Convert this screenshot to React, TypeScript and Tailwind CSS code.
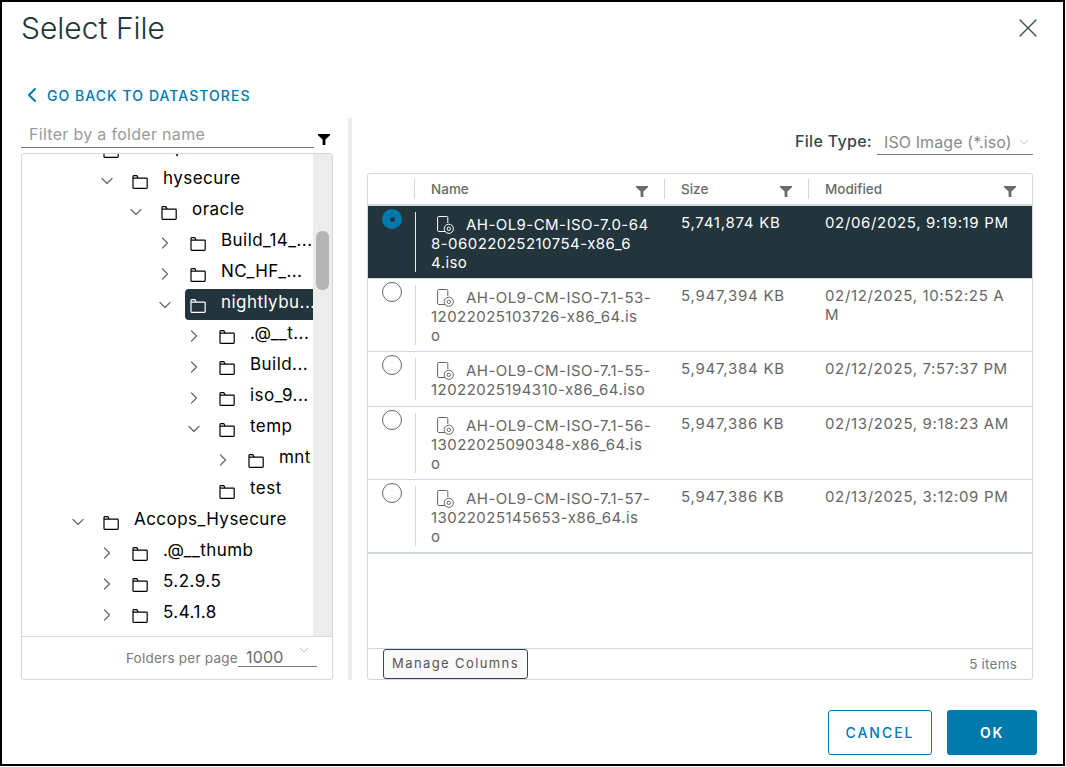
import { ChevronDown, ChevronLeft, ChevronRight, X } from "lucide-react";

const FONT = "font-['Inter','Liberation_Sans',sans-serif]";

interface TreeRow {
    name: string;
    level: number;
    open?: boolean;
    leaf?: boolean;
    selected?: boolean;
}

const TREE: TreeRow[] = [
    { name: "accops", level: 1, open: true },
    { name: "hysecure", level: 2, open: true },
    { name: "oracle", level: 3, open: true },
    { name: "Build_14_...", level: 4 },
    { name: "NC_HF_...", level: 4 },
    { name: "nightlybu...", level: 4, open: true, selected: true },
    { name: ".@__t...", level: 5 },
    { name: "Build...", level: 5 },
    { name: "iso_9...", level: 5 },
    { name: "temp", level: 5, open: true },
    { name: "mnt", level: 6 },
    { name: "test", level: 5, leaf: true },
    { name: "Accops_Hysecure", level: 1, open: true },
    { name: ".@__thumb", level: 2 },
    { name: "5.2.9.5", level: 2 },
    { name: "5.4.1.8", level: 2 },
];

const FILES = [
    {
        name: ["AH-OL9-CM-ISO-7.0-64", "8-06022025210754-x86_6", "4.iso"],
        size: "5,741,874 KB",
        modified: ["02/06/2025, 9:19:19 PM"],
        selected: true,
    },
    {
        name: ["AH-OL9-CM-ISO-7.1-53-", "12022025103726-x86_64.is", "o"],
        size: "5,947,394 KB",
        modified: ["02/12/2025, 10:52:25 A", "M"],
    },
    {
        name: ["AH-OL9-CM-ISO-7.1-55-", "12022025194310-x86_64.iso"],
        size: "5,947,384 KB",
        modified: ["02/12/2025, 7:57:37 PM"],
    },
    {
        name: ["AH-OL9-CM-ISO-7.1-56-", "13022025090348-x86_64.is", "o"],
        size: "5,947,386 KB",
        modified: ["02/13/2025, 9:18:23 AM"],
    },
    {
        name: ["AH-OL9-CM-ISO-7.1-57-", "13022025145653-x86_64.is", "o"],
        size: "5,947,386 KB",
        modified: ["02/13/2025, 3:12:09 PM"],
    },
];

function FolderIcon() {
    return (
        <svg width="16" height="14" viewBox="0 0 16 14" fill="none" stroke="currentColor" strokeWidth="1.2" className="mt-[3px] shrink-0">
            <path d="M1 3.2V1.4C1 1 1.3.7 1.7.7h3.1l1.5 2.5h8.2c.4 0 .7.3.7.7v8.7c0 .4-.3.7-.7.7H1.7c-.4 0-.7-.3-.7-.7V3.2h5.3" />
        </svg>
    );
}

function FilterIcon({ className }: { className: string }) {
    return (
        <svg width="12" height="11" viewBox="0 0 12 11" fill="currentColor" className={className}>
            <path d="M0 0h12v1.2L7.4 5.4V11H4.6V5.4L0 1.2z" />
        </svg>
    );
}

function IsoIcon() {
    return (
        <svg width="18" height="18" viewBox="0 0 18 18" fill="none" stroke="currentColor" strokeWidth="1" className="block shrink-0">
            <path d="M9 15.5H2.6c-.6 0-1-.4-1-1V1.5c0-.6.4-1 1-1h8.2c.6 0 1 .4 1 1V7" />
            <circle cx="12.8" cy="12.8" r="4.6" />
            <circle cx="12.8" cy="12.8" r="1.7" />
        </svg>
    );
}

function Tree() {
    return (
        <div className="-mt-[20px]">
            {TREE.map((row) => (
                <div key={row.name} className="flex h-[31px] items-center" style={{ paddingLeft: (row.level - 1) * 29 + 46 }}>
                    <span className="flex w-[20px] shrink-0 justify-center text-[#6b6b6b]">
                        {row.leaf ? null : row.open ? (
                            <ChevronDown size={22} strokeWidth={1.5} />
                        ) : (
                            <ChevronRight size={22} strokeWidth={1.5} />
                        )}
                    </span>
                    <div
                        className={`ml-[10px] flex h-[31px] min-w-0 flex-1 items-center gap-[15px] whitespace-nowrap rounded-l-[4px] pl-[5px] text-[17px] tracking-[0.45px] ${
                            row.selected ? "bg-[#22343c] text-white" : "text-black"
                        }`}
                    >
                        <FolderIcon />
                        <span className="-mt-[3px] overflow-hidden">{row.name}</span>
                    </div>
                </div>
            ))}
        </div>
    );
}

export default function App() {
    return (
        <div className={`${FONT} flex h-[766px] w-[1065px] flex-col border-2 border-black bg-white pl-[19px] pr-[30px]`}>
            <div className="flex h-[52px] shrink-0 items-center justify-between">
                <h1 className="text-[30px] font-light text-[#22343c]">Select File</h1>
                <X size={32} strokeWidth={1.1} className="-mr-[11px] text-[#47555c]" />
            </div>

            <div className="mt-[31px] flex h-[20px] items-center pl-[4px] text-[14px] font-medium tracking-[1.05px] text-[#0079ad]">
                <ChevronLeft size={24} strokeWidth={2} className="-ml-[5px] mr-[3px] shrink-0" />
                GO BACK TO DATASTORES
            </div>

            <div className="mt-[13px] flex h-[562px]">
                <div className="flex w-[312px] shrink-0 flex-col">
                    <div className="flex h-[35px] shrink-0 items-start">
                        <div className="mt-[6px] h-[24px] w-[293px] border-b border-[#6f7b82] px-[8px] text-[16px] leading-[20px] tracking-[0.3px] text-[#9a9a9a]">
                            Filter by a folder name
                        </div>
                        <FilterIcon className="ml-[4px] mt-[16px] text-black" />
                    </div>
                    <div className="flex min-h-0 flex-1 flex-col overflow-hidden rounded-[3px] border border-[#cfd8dc]">
                        <div className="flex min-h-0 flex-1">
                            <div className="min-w-0 flex-1 overflow-hidden">
                                <Tree />
                            </div>
                            <div className="w-[19px] shrink-0 bg-[#ececec] pl-[3px] pt-[77px]">
                                <div className="h-[59px] w-[13px] rounded-[6px] bg-[#b5b5b5]" />
                            </div>
                        </div>
                        <div className="flex h-[43px] shrink-0 items-start justify-end border-t border-[#cfd8dc] pr-[15px] pt-[11px] text-[13.5px] tracking-[0.25px] text-[#7a7a7a]">
                            <span>Folders per page</span>
                            <span className="flex h-[19px] w-[79px] justify-between border-b border-[#6f7b82] pl-[8px] text-[16px] leading-[18px] tracking-[0.2px] text-[#6b6b6b]">
                                1000
                                <ChevronDown size={16} strokeWidth={1} className="-mt-[6px] mr-[5px] text-[#9a9a9a]" />
                            </span>
                        </div>
                    </div>
                </div>

                <div className="ml-[15px] w-[4px] shrink-0 bg-[#ececec]" />

                <div className="ml-[15px] flex min-w-0 flex-1 flex-col">
                    <div className="flex h-[55px] shrink-0 items-start justify-end">
                        <span className="mr-[5px] mt-[11px] text-[16px] font-medium tracking-[0.3px] text-[#37474f]">File Type:</span>
                        <span className="mt-[11px] flex h-[26px] w-[156px] items-center justify-between border-b border-[#6f7b82] pl-[7px] text-[16px] tracking-[0.1px] text-[#8a8a8a]">
                            ISO Image (*.iso)
                            <ChevronDown size={14} strokeWidth={1} className="mr-[2px] text-[#9a9a9a]" />
                        </span>
                    </div>

                    <div className="flex min-h-0 flex-1 flex-col rounded-[3px] border border-[#cfd8dc]">
                        <div className="grid h-[32px] shrink-0 grid-cols-[47px_250px_144px_1fr] border-b-2 border-[#d4d9dc] text-[13.5px] font-medium text-[#6b6b6b]">
                            <div className="my-[5px] border-r border-[#cfd8dc]" />
                            {["Name", "Size", "Modified"].map((label, i) => (
                                <div key={label} className={`my-[5px] flex justify-between pl-[16px] pr-[16px] ${i < 2 ? "border-r border-[#cfd8dc]" : "pr-[15px]"}`}>
                                    <span className="mt-[1px] leading-[18px]">{label}</span>
                                    <FilterIcon className="mt-[7px] text-[#6b6b6b]" />
                                </div>
                            ))}
                        </div>

                        {FILES.map((file) => (
                            <div
                                key={file.name[1]}
                                className={`grid shrink-0 grid-cols-[47px_250px_144px_1fr] border-b border-[#cfd8dc] text-[15px] leading-[19px] ${
                                    file.selected ? "bg-[#22343c] text-white" : "text-[#666666]"
                                }`}
                            >
                                <div className="pl-[14px] pt-[3px]">
                                    {file.selected ? (
                                        <div className="flex h-[20px] w-[20px] items-center justify-center rounded-full bg-[#0079ad]">
                                            <div className="h-[5px] w-[5px] rounded-full bg-[#22343c]" />
                                        </div>
                                    ) : (
                                        <div className="h-[20px] w-[20px] rounded-full border border-[#666666] bg-white" />
                                    )}
                                </div>
                                <div className={`my-[6px] min-h-[42px] border-l pl-[15px] tracking-[0.45px] ${file.selected ? "border-[#e8e8e8]" : "border-[#cfd8dc]"}`}>
                                    {file.name.map((line, i) => (
                                        <div key={i} className={`flex items-end whitespace-nowrap ${i === 0 ? "h-[22px]" : "h-[19px]"}`}>
                                            {i === 0 && (
                                                <span className="ml-[5px] mr-[12px]">
                                                    <IsoIcon />
                                                </span>
                                            )}
                                            {line}
                                        </div>
                                    ))}
                                </div>
                                <div className="pl-[16px] pt-[7px] whitespace-nowrap tracking-[0.75px]">{file.size}</div>
                                <div className="pl-[16px] pt-[7px] whitespace-nowrap tracking-[0.65px]">
                                    {file.modified.map((line) => (
                                        <div key={line}>{line}</div>
                                    ))}
                                </div>
                            </div>
                        ))}

                        <div className="flex-1 border-t border-[#d4d9dc]" />

                        <div className="flex h-[31px] shrink-0 items-center justify-between border-t border-[#cfd8dc] pl-[15px] pr-[15px]">
                            <button className="h-[30px] w-[145px] rounded-[3px] border border-[#37474f] bg-[#fafafa] text-[13px] tracking-[1.4px] text-[#555555]">
                                Manage Columns
                            </button>
                            <span className="text-[13.5px] tracking-[0.2px] text-[#7a7a7a]">5 items</span>
                        </div>
                    </div>
                </div>
            </div>

            <div className="mt-[30px] flex justify-end gap-[15px] -mr-[4px]">
                <button className="h-[45px] w-[104px] rounded-[3px] border border-[#0079ad] bg-white text-[14px] font-medium tracking-[2px] text-[#0079ad]">
                    CANCEL
                </button>
                <button className="h-[45px] w-[90px] rounded-[3px] bg-[#0079ad] text-[14px] font-semibold tracking-[1.8px] text-white">
                    OK
                </button>
            </div>
        </div>
    );
}
